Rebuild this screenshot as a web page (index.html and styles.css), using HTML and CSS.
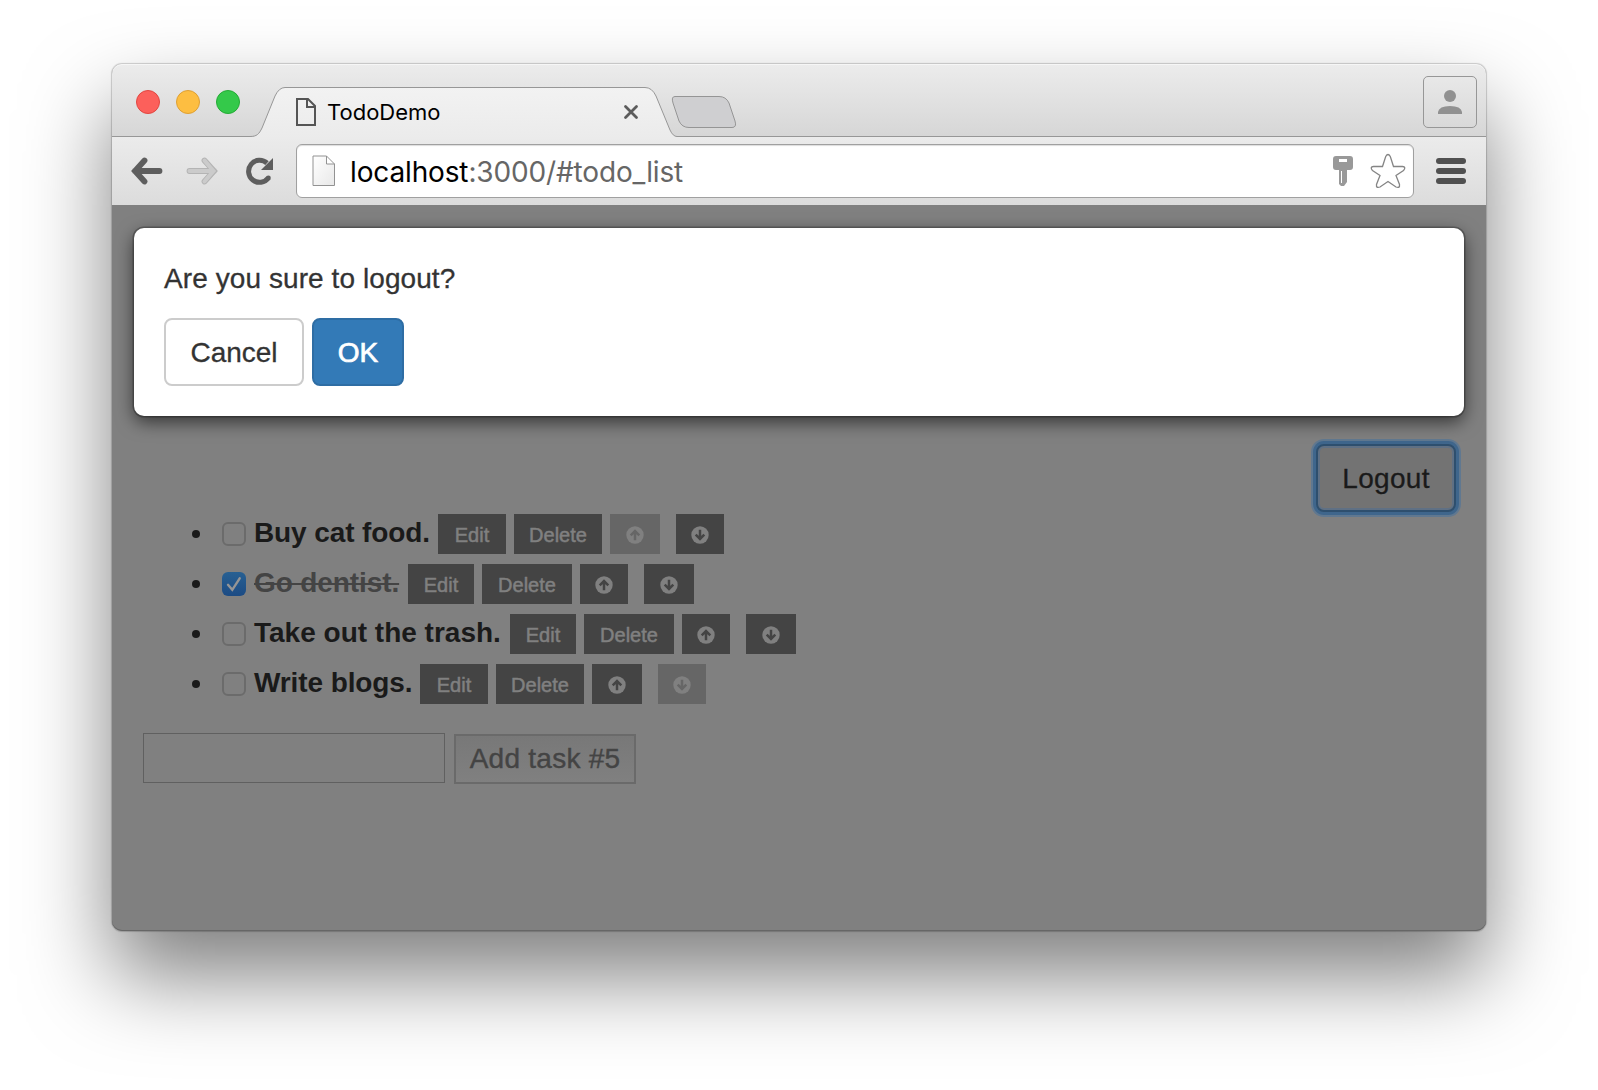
FILE: index.html
```html
<!DOCTYPE html>
<html lang="en">
<head>
<meta charset="utf-8">
<title>TodoDemo</title>
<link rel="stylesheet" href="styles.css">
</head>
<body>
<svg class="defs" width="0" height="0">
  <symbol id="up" viewBox="0 0 18 18"><circle cx="9" cy="9" r="8.7" fill="currentColor"/><path d="M9 14.2V5M4.7 9.3 9 5l4.3 4.3" fill="none" stroke="var(--bg)" stroke-width="2.5"/></symbol>
  <symbol id="down" viewBox="0 0 18 18"><circle cx="9" cy="9" r="8.7" fill="currentColor"/><path d="M9 3.8V13M4.7 8.7 9 13l4.3-4.3" fill="none" stroke="var(--bg)" stroke-width="2.5"/></symbol>
</svg>
<div class="window">
  <header class="tabstrip">
    <div class="lights"><i class="light red"></i><i class="light yellow"></i><i class="light green"></i></div>
    <div class="tab">
      <svg class="tab-shape" width="424" height="52" viewBox="0 0 424 52">
        <defs><linearGradient id="tg" x1="0" y1="0" x2="0" y2="1"><stop offset="0" stop-color="#f2f2f2"/><stop offset="1" stop-color="#ebebeb"/></linearGradient></defs>
        <path d="M-3 52V49.5C4 49.5 6 47 9 41L22 9Q26 .5 32 .5H392Q399 .5 403 9L417 43Q420 49.5 424 49.5V52Z" fill="url(#tg)"/>
        <path d="M-3 49.5C4 49.5 6 47 9 41L22 9Q26 .5 32 .5H392Q399 .5 403 9L417 43Q420 49.5 424 49.5" fill="none" stroke="#979797"/>
      </svg>
      <svg class="tab-file" width="20" height="28" viewBox="0 0 20 28"><path d="M1 1H12L19 8V27H1ZM11 1V9H19" fill="none" stroke="#555" stroke-width="2"/></svg>
      <span class="tab-title">TodoDemo</span>
      <svg class="tab-close" width="16" height="16" viewBox="0 0 16 16"><path d="M2.500 2.500 13.500 13.500M13.500 2.500 2.500 13.500" stroke="#5c5c5c" stroke-width="2.800" stroke-linecap="round"/></svg>
    </div>
    <svg class="newtab" width="66" height="34" viewBox="0 0 66 34"><path d="M4 1.500H48Q55 1.500 58 8L64 26Q66 32.500 61 32.500H18Q11 32.500 8 26L2 8Q0 1.500 4 1.500Z" fill="#cfcfd1" stroke="#959595"/></svg>
    <div class="avatar"><svg width="24" height="24" viewBox="0 0 24 24"><circle cx="12" cy="6" r="6" fill="#919191"/><path d="M0 24V22Q1 16 12 16T24 22V24Z" fill="#919191"/></svg></div>
  </header>
  <nav class="toolbar">
    <svg class="nav" width="32" height="28" viewBox="0 0 32 28"><path d="M4 14H28.500M13.500 3.500 4 14 13.500 24.500" fill="none" stroke="#5e5e5e" stroke-width="5.800" stroke-linecap="round" stroke-linejoin="miter"/></svg>
    <svg class="nav" width="32" height="28" viewBox="0 0 32 28"><path d="M3.500 14H28M18.500 3.500 28 14 18.500 24.500" fill="none" stroke="#b4b4b4" stroke-width="5.800" stroke-linecap="round"/><path d="M3.500 14H27M18.500 3.500 27.500 14 18.500 24.500" fill="none" stroke="#cbcbcb" stroke-width="4" stroke-linecap="round"/></svg>
    <svg class="nav" width="28" height="28" viewBox="0 0 28 28"><path d="M22.500 20.800A11 11 0 1 1 21 6.200" fill="none" stroke="#5e5e5e" stroke-width="5"/><circle cx="22.400" cy="21" r="2.400" fill="#5e5e5e"/><path d="M27 1V13H15Z" fill="#5e5e5e"/></svg>
    <div class="omnibox">
      <svg class="url-file" width="24" height="32" viewBox="0 0 24 32"><defs><linearGradient id="fg" x1="0" y1="0" x2="1" y2="1"><stop offset="0" stop-color="#fff"/><stop offset="1" stop-color="#e8e8e8"/></linearGradient></defs><path d="M1 1H14.500L22.500 9V30.500H1ZM14.500 1V9H22.500" fill="url(#fg)" stroke="#929292"/></svg>
      <span class="url"><b>localhost</b>:3000/#todo_list</span>
      <svg class="key" width="20" height="30" viewBox="0 0 20 30"><path fill-rule="evenodd" d="M3 0H17Q20 0 20 3V11Q20 14 17 14H14V26L11 30H8L6 28V14H3Q0 14 0 11V3Q0 0 3 0ZM6 3V6H14V3ZM8 15V27H9V15Z" fill="#999"/></svg>
      <svg class="star" width="36" height="36" viewBox="0 0 36 36"><path d="M15.700 3.500Q18 -.5 20.300 3.500L23.500 13.500H32.500Q36.500 14 33.500 17.500L26 22.500 29.500 31.500Q30 35.500 26 34L18 28.500 10 34Q6 35.500 6.500 31.500L10 22.500 2.500 17.500Q-.5 14 3.500 13.500H12.500Z" fill="#fff" stroke="#858585" stroke-width="1.300"/></svg>
    </div>
    <div class="menu"><i></i><i></i><i></i></div>
  </nav>
  <main class="page">
    <div class="account"><button class="logout">Logout</button></div>
    <ul class="tasks">
      <li><i class="bullet"></i><i class="check"></i><strong class="w1">Buy cat food.</strong><button class="b68">Edit</button><button class="b88">Delete</button><button class="b50 off"><svg width="18" height="18"><use href="#up"/></svg></button><button class="b48 last"><svg width="18" height="18"><use href="#down"/></svg></button></li>
      <li><i class="bullet"></i><i class="check on"><svg width="24" height="24" viewBox="0 0 24 24"><path d="M6 12.800 10.300 17.800 17.700 6.300" fill="none" stroke="#959595" stroke-width="2.400" stroke-linecap="round"/></svg></i><strong class="w2"><s>Go dentist.</s></strong><button class="b66">Edit</button><button class="b90">Delete</button><button class="b48"><svg width="18" height="18"><use href="#up"/></svg></button><button class="b50 last"><svg width="18" height="18"><use href="#down"/></svg></button></li>
      <li><i class="bullet"></i><i class="check"></i><strong class="w3">Take out the trash.</strong><button class="b66">Edit</button><button class="b90">Delete</button><button class="b48"><svg width="18" height="18"><use href="#up"/></svg></button><button class="b50 last"><svg width="18" height="18"><use href="#down"/></svg></button></li>
      <li><i class="bullet"></i><i class="check"></i><strong class="w4">Write blogs.</strong><button class="b68">Edit</button><button class="b88">Delete</button><button class="b50"><svg width="18" height="18"><use href="#up"/></svg></button><button class="b48 last off"><svg width="18" height="18"><use href="#down"/></svg></button></li>
    </ul>
    <form class="add"><input type="text" class="field"><button type="button" class="submit">Add task #5</button></form>
    <div class="dialog">
      <p>Are you sure to logout?</p>
      <div class="actions"><button class="cancel">Cancel</button><button class="ok">OK</button></div>
    </div>
  </main>
</div>
</body>
</html>
```
FILE: styles.css
```css
* { box-sizing: border-box; }
body { margin: 0; height: 1090px; padding: 64px 112px 0; background: #fff; overflow: hidden; font-family: "Liberation Sans", Arial, sans-serif; font-size: 28px; color: #333; }
button { font: inherit; margin: 0; padding: 0; border: 0; white-space: nowrap; }
svg { display: block; flex: none; }
.defs { position: absolute; }

.window { width: 1374px; height: 867px; border-radius: 10px; background: #808080; box-shadow: 0 0 1px 1px rgba(0,0,0,.18), 0 45px 86px rgba(0,0,0,.5); display: flex; flex-direction: column; }

.tabstrip { height: 73px; flex: none; display: flex; align-items: flex-start; border-radius: 10px 10px 0 0; background: linear-gradient(#ececec, #d6d6d6); box-shadow: inset 0 1px #f6f6f6, inset 0 -1px #979797; }
.lights { display: flex; gap: 16px; margin: 26px 0 0 24px; }
.light { width: 24px; height: 24px; border-radius: 50%; border: 1px solid; }
.red { background: #fc605b; border-color: #e24640; }
.yellow { background: #fdbe41; border-color: #dfa033; }
.green { background: #34c94a; border-color: #24ab35; }
.tab { position: relative; width: 424px; height: 50px; margin: 23px 0 0 13px; display: flex; align-items: center; }
.tab-shape { position: absolute; left: 0; top: 0; z-index: 0; overflow: visible; }
.tab-file, .tab-title, .tab-close { position: relative; }
.tab-file { margin-left: 43px; }
.tab-title { margin-left: 11px; width: 120px; font: 400 22px/28px Inter, sans-serif; color: #000; }
.tab-close { margin-left: 176px; }
.newtab { margin: 31px 0 0 -6px; }
.avatar { width: 54px; height: 52px; margin: 12px 9px 0 auto; border: 1px solid #979797; border-radius: 5px; display: flex; align-items: center; justify-content: center; }

.toolbar { height: 68px; flex: none; display: flex; align-items: center; background: linear-gradient(#ebebeb, #dcdcdc); padding-left: 19px; }
.nav { margin-right: 23px; }
.nav + .nav + .nav { margin-left: 5px; margin-right: 22px; }
.omnibox { width: 1118px; height: 54px; border: 1px solid #a0a0a0; border-radius: 6px; background: #fff; box-shadow: inset 0 1px 1px #ddd; display: flex; align-items: center; padding-left: 15px; }
.url { margin: 2px 0 0 14px; width: 400px; font: 28px/40px Inter, sans-serif; letter-spacing: -.14px; color: #666; white-space: nowrap; }
.url b { font-weight: 400; color: #000; }
.key { margin-left: auto; }
.star { margin: -1px 7px 0 17px; }
.menu { margin-left: 22px; display: flex; flex-direction: column; gap: 4px; }
.menu i { width: 30px; height: 6px; border-radius: 3px; background: #505050; }

.page { position: relative; flex: 1; padding: 239px 30px 0 31px; background: #808080; border-radius: 0 0 10px 10px; box-shadow: inset 0 -1px #666; }
.account { display: flex; justify-content: flex-end; }
.logout { width: 140px; height: 68px; padding-top: 2px; border: 2px solid #2e4f6e; border-radius: 8px; background: #737373; color: #1a1a1a; letter-spacing: .3px; -webkit-text-stroke: .3px; box-shadow: 0 0 0 3px #3f668c, 0 0 0 5px #607890, inset 0 0 0 2px #5f7084; }
.tasks { list-style: none; margin: 2px 0 0; padding: 0 0 0 49px; display: flex; flex-direction: column; gap: 10px; }
.tasks li { height: 40px; display: flex; align-items: center; color: #1a1a1a; }
.bullet { width: 8px; height: 8px; border-radius: 50%; background: #1a1a1a; margin-right: 22px; }
.check { width: 24px; height: 24px; flex: none; border: 2px solid #6b6b6b; border-radius: 6px; margin-right: 8px; }
.check.on { border: 0; background: linear-gradient(#286092, #1c4b84); }
.tasks strong { line-height: 32px; margin-top: -2px; white-space: nowrap; flex: none; }
.w1 { width: 184px; } .w2 { width: 154px; } .w3 { width: 256px; } .w4 { width: 166px; }
.w1, .w2, .w4 { letter-spacing: -.1px; }
.tasks s { color: #444; text-decoration-thickness: 2px; }
.tasks button { --bg: #444; height: 40px; flex: none; margin-right: 8px; background: var(--bg); color: #808080; font-size: 20px; display: flex; align-items: center; justify-content: center; padding-top: 2px; -webkit-text-stroke: .5px; }
.tasks .off { --bg: #666; }
.tasks .last { margin-left: 8px; }
.b48 { width: 48px; } .b50 { width: 50px; } .b66 { width: 66px; } .b68 { width: 68px; } .b88 { width: 88px; } .b90 { width: 90px; }
.add { display: flex; align-items: flex-start; margin-top: 29px; }
.field { width: 302px; height: 50px; border: 1px solid #606060; background: #808080; padding: 0; }
.submit { width: 182px; height: 50px; margin: 1px 0 0 9px; border: 2px solid #6a6a6a; background: linear-gradient(#787878, #808080); color: #444; letter-spacing: .25px; -webkit-text-stroke: .4px; }

.dialog { position: absolute; left: 22px; top: 23px; width: 1330px; height: 188px; padding: 30px; border-radius: 10px; background: #fff; box-shadow: 0 0 0 1.500px rgba(0,0,0,.25), 0 6px 18px rgba(0,0,0,.6); }
.dialog p { margin: 1px 0 19px; line-height: 40px; letter-spacing: .08px; -webkit-text-stroke: .3px; }
.actions { display: flex; gap: 8px; }
.cancel, .ok { height: 68px; padding-top: 2px; border: 2px solid #ccc; border-radius: 8px; background: #fff; color: #333; -webkit-text-stroke: .3px; }
.cancel { width: 140px; }
.ok { width: 92px; background: #337ab7; border-color: #2e6da4; color: #fff; -webkit-text-stroke: .7px; }
```
